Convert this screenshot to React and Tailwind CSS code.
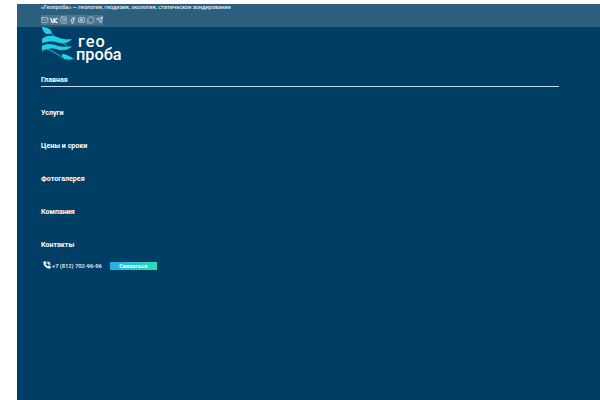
import React from "react";
import { Mail, Instagram, Facebook, Youtube, MessageCircle, Send, PhoneCall } from "lucide-react";

const nav = ["Услуги", "Цены и сроки", "Фотогалерея", "Компания", "Контакты"];

function Vk() {
  return (
    <svg width="8" height="7" viewBox="0 0 8 7" fill="none" stroke="#e4ecf2" strokeWidth="1.5">
      <path d="M0.5 1 L2.5 6 M7.5 1 L4 3.5 L7.5 6 M4 1 V6" />
    </svg>
  );
}

function Logo() {
  return (
    <svg width="34" height="34" viewBox="0 0 34 34" className="shrink-0">
      <path d="M10 6 C14 12 20 14 26 19 M6 22 C12 24 16 27 22 31" stroke="#138fb0" strokeWidth="1.5" fill="none" />
      <path d="M1 0 C6 0 10 2 11 6 C8 8 4 7 3 5 C2 3 1 2 1 0 Z" fill="#1fd0e6" />
      <path d="M1 12 C5 8 11 8 16 10 C21 12 26 13 31 12 C27 17 20 17 15 15 C10 14 6 15 1 16 Z" fill="#1fd0e6" />
      <path d="M1 19 C6 16 12 17 17 19 C22 20 27 20 31 19 C27 24 20 24 15 22 C10 21 5 22 1 24 Z" fill="#1fd0e6" />
      <path d="M21 27 C25 27 29 29 33 32 C28 33 24 33 22 31 C21 30 21 28 21 27 Z" fill="#1fd0e6" />
    </svg>
  );
}

export default function App() {
  return (
    <div className="min-h-[400px] bg-white pt-[4px] pl-[17px] overflow-hidden font-['Roboto',sans-serif]">
      <div className="h-[396px] bg-[#003e66] flex flex-col">
        <div className="h-[23px] bg-[#2c5e7e] pl-[24px] flex flex-col">
          <div className="h-[8px] text-[5.65px] leading-[7px] font-medium text-[#e6edf2] whitespace-nowrap">
            «Геопроба» — геология, геодезия, экология, статическое зондирование
          </div>
          <div className="mt-[3px] flex items-center gap-[1.5px] h-[10px] w-[62px] bg-[#4a7690]">
            <Mail size={8} color="#e4ecf2" strokeWidth={1.5} />
            <span className="w-[8px] flex justify-center"><Vk /></span>
            <Instagram size={8} color="#e4ecf2" strokeWidth={1.8} />
            <span className="w-[8px] flex justify-center"><Facebook size={7} color="#e4ecf2" strokeWidth={2.4} /></span>
            <Youtube size={8} color="#e4ecf2" strokeWidth={2.4} />
            <MessageCircle size={8} color="#e4ecf2" strokeWidth={1.8} />
            <Send size={8} color="#e4ecf2" strokeWidth={2.2} />
          </div>
        </div>
        <div className="pl-[24px] pr-[41px] flex flex-col">
          <div className="h-[34px] flex items-end">
            <Logo />
            <div className="ml-[1px] flex flex-col text-white text-[16.3px] leading-[13px] font-medium">
              <span className="ml-[2px] tracking-[1px]">гео</span>
              <span>проба</span>
            </div>
          </div>
          <div className="mt-[12px] h-[12px] border-b border-[#c5d9ea] box-content pb-[1px] text-[7.1px] leading-[13px] font-bold text-white">
            Главная
          </div>
          <div className="flex flex-col gap-[22px] mt-[19px]">
            {nav.map((t) => (
              <div key={t} className="h-[11px] text-[7.1px] leading-[13px] font-bold text-white">{t}</div>
            ))}
          </div>
          <div className="mt-[13px] flex items-center h-[8px]">
            <PhoneCall size={8} color="#ffffff" fill="#ffffff" strokeWidth={2} className="ml-[2px] -mt-[2px]" />
            <span className="ml-[1px] text-[5.7px] font-semibold text-[#e6edf2] whitespace-nowrap">+7 (812) 702-96-96</span>
            <div className="ml-[8px] w-[47px] h-[8px] bg-gradient-to-r from-[#29aee6] to-[#2fdcb0] text-white text-[5.7px] leading-[8px] font-bold text-center">
              Связаться
            </div>
          </div>
        </div>
      </div>
    </div>
  );
}
